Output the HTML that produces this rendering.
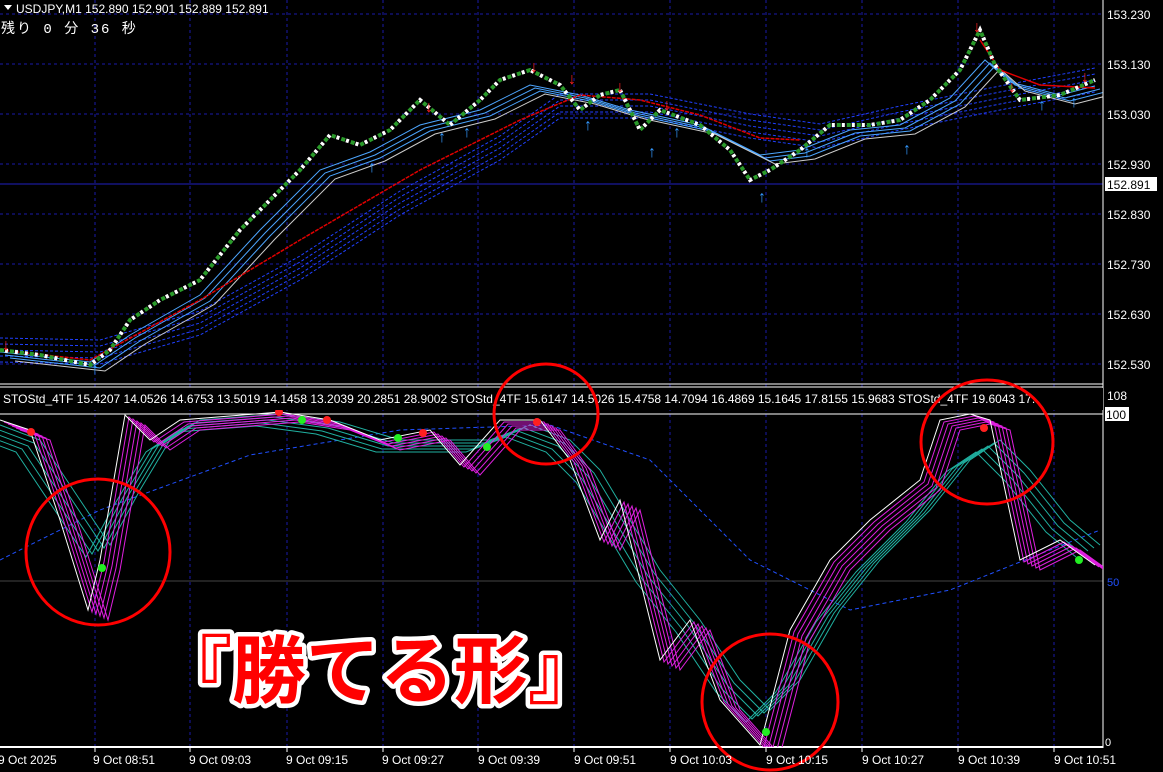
<!DOCTYPE html>
<html><head><meta charset="utf-8"><style>
html,body{margin:0;padding:0;background:#000;width:1163px;height:772px;overflow:hidden}
svg{display:block}
text{font-family:"Liberation Sans","Noto Sans CJK JP",sans-serif}
</style></head><body>
<svg width="1163" height="772" viewBox="0 0 1163 772" xmlns="http://www.w3.org/2000/svg">
<defs>
<clipPath id="ci"><rect x="0" y="410" width="1103" height="337"/></clipPath>
<clipPath id="cp"><rect x="0" y="0" width="1103" height="383"/></clipPath>
</defs>
<rect width="1163" height="772" fill="#000"/>
<g stroke="#1a1aa8" stroke-dasharray="3,3" stroke-width="1">
<line x1="95" y1="0" x2="95" y2="746"/><line x1="190" y1="0" x2="190" y2="746"/><line x1="287" y1="0" x2="287" y2="746"/><line x1="383" y1="0" x2="383" y2="746"/><line x1="478" y1="0" x2="478" y2="746"/><line x1="574" y1="0" x2="574" y2="746"/><line x1="670" y1="0" x2="670" y2="746"/><line x1="766" y1="0" x2="766" y2="746"/><line x1="862" y1="0" x2="862" y2="746"/><line x1="958" y1="0" x2="958" y2="746"/><line x1="1054" y1="0" x2="1054" y2="746"/>
<line x1="0" y1="14" x2="1103" y2="14"/><line x1="0" y1="64" x2="1103" y2="64"/><line x1="0" y1="114" x2="1103" y2="114"/><line x1="0" y1="164" x2="1103" y2="164"/><line x1="0" y1="214" x2="1103" y2="214"/><line x1="0" y1="264" x2="1103" y2="264"/><line x1="0" y1="314" x2="1103" y2="314"/><line x1="0" y1="364" x2="1103" y2="364"/>
</g>
<line x1="0" y1="184" x2="1103" y2="184" stroke="#2020c0"/>
<line x1="0" y1="581" x2="1103" y2="581" stroke="#444"/>
<g fill="none" stroke-width="1" clip-path="url(#cp)">
<g stroke="#2040ff" stroke-dasharray="3,2">
<polyline id="d" points="0,362 100,364 200,335 300,280 400,215 500,160 560,118 650,118 750,138 820,148 900,130 960,118 1000,110 1095,92"/>
<use href="#d" transform="translate(0,-6)"/><use href="#d" transform="translate(0,-12)"/><use href="#d" transform="translate(0,-18)"/><use href="#d" transform="translate(0,-24)"/>
</g>
<g stroke="#4da6ff">
<polyline id="r" points="0,352 90,362 130,335 200,295 260,230 320,170 370,152 420,125 480,110 530,85 580,95 630,110 700,125 760,155 800,150 850,130 900,125 950,98 985,60 1010,82 1060,95 1095,86"/>
<use href="#r" transform="translate(5,3)"/><use href="#r" transform="translate(10,6)"/>
<use href="#r" transform="translate(15,9)" stroke="#ccc"/>
</g>
<polyline points="0,350 90,360 200,300 300,240 420,170 520,120 580,95 640,100 700,115 760,138 800,140" stroke="#e00000" stroke-width="1.5" stroke-dasharray="4,1"/>
<polyline points="980,40 1000,70 1040,85 1095,88" stroke="#e00000" stroke-width="1.5"/>
</g>
<g fill="none" stroke-width="1">
<polyline points="0,350 40,355 90,365 110,350 130,320 160,300 200,280 240,230 270,200 300,170 330,135 360,145 390,130 420,100 450,125 480,100 500,80 530,70 560,85 580,110 600,95 620,90 640,130 660,110 700,125 730,150 750,180 770,170 800,150 830,125 870,125 900,120 930,100 960,70 980,30 995,65 1020,100 1060,95 1095,80" stroke="#2a9a2a" stroke-width="4" stroke-dasharray="4,6"/>
<polyline points="0,350 40,355 90,365 110,350 130,320 160,300 200,280 240,230 270,200 300,170 330,135 360,145 390,130 420,100 450,125 480,100 500,80 530,70 560,85 580,110 600,95 620,90 640,130 660,110 700,125 730,150 750,180 770,170 800,150 830,125 870,125 900,120 930,100 960,70 980,30 995,65 1020,100 1060,95 1095,80" stroke="#fff" stroke-width="4" stroke-dasharray="3,7" stroke-dashoffset="5"/>
</g>
<g fill="#3399ff" font-size="16" font-weight="bold"><text x="368" y="172">↑</text><text x="438" y="142">↑</text><text x="463" y="137">↑</text><text x="584" y="130">↑</text><text x="648" y="157">↑</text><text x="673" y="137">↑</text><text x="758" y="202">↑</text><text x="803" y="157">↑</text><text x="903" y="154">↑</text><text x="1038" y="110">↑</text><text x="1070" y="107">↑</text><text x="91" y="374">↑</text></g>
<g fill="#ff2020" font-size="16" font-weight="bold"><text x="2" y="350">↓</text><text x="530" y="72">↓</text><text x="568" y="84">↓</text><text x="616" y="92">↓</text><text x="663" y="110">↓</text><text x="973" y="32">↓</text><text x="1008" y="92">↓</text><text x="1081" y="82">↓</text><text x="425" y="112">↓</text></g>
<g fill="#fff" font-size="12">
<text x="1107" y="19">153.230</text><text x="1107" y="69">153.130</text><text x="1107" y="119">153.030</text><text x="1107" y="169">152.930</text><text x="1107" y="219">152.830</text><text x="1107" y="269">152.730</text><text x="1107" y="319">152.630</text><text x="1107" y="369">152.530</text><text x="1107" y="400">108</text>
</g>
<rect x="1105" y="177" width="52" height="14" fill="#fff"/><text x="1107" y="189" font-size="12" fill="#000">152.891</text>
<rect x="1105" y="407" width="24" height="14" fill="#fff"/><text x="1106" y="419" font-size="12" fill="#000">100</text>
<text x="1107" y="586" font-size="11" fill="#2050ff">50</text>
<text x="1105" y="746" font-size="11" fill="#fff">0</text>
<line x1="1103" y1="0" x2="1103" y2="748" stroke="#fff"/>
<line x1="0" y1="384" x2="1103" y2="384" stroke="#fff"/>
<line x1="0" y1="387" x2="1103" y2="387" stroke="#fff"/>
<line x1="0" y1="414" x2="1103" y2="414" stroke="#fff"/>
<line x1="0" y1="747" x2="1103" y2="747" stroke="#fff" stroke-width="2"/>
<g fill="none" clip-path="url(#ci)">
<polyline points="0,560 100,510 250,455 400,430 550,425 650,460 750,560 850,610 950,590 1050,550 1100,530" stroke="#2050ff" stroke-dasharray="4,3"/>
<g stroke="#20b0a0" stroke-width="1">
<polyline id="w" points="0,425 40,440 80,500 110,545 140,490 170,440 200,420 280,414 340,422 400,440 450,440 490,440 530,425 570,440 600,470 630,520 660,570 700,620 740,680 770,710 800,680 840,610 880,560 930,510 970,460 1000,440 1030,470 1070,520 1100,545" transform="translate(0,0)"/>
<use href="#w" transform="translate(-6,3)"/><use href="#w" transform="translate(-12,6)"/><use href="#w" transform="translate(-18,9)"/><use href="#w" transform="translate(-24,12)"/>
</g>
<g stroke="#e020e0" stroke-width="1">
<polyline id="m" points="0,420 30,430 60,520 88,610 100,560 125,415 150,440 180,420 280,412 330,420 380,440 430,430 460,465 500,420 540,420 570,460 600,540 620,500 640,580 660,660 690,620 720,700 760,745 790,630 830,560 870,520 920,480 940,420 970,414 990,420 1020,560 1060,540 1095,565" transform="translate(4,2)"/>
<use href="#m" transform="translate(4,2)"/><use href="#m" transform="translate(8,4)"/><use href="#m" transform="translate(12,6)"/><use href="#m" transform="translate(16,8)"/>
</g>
<polyline points="0,420 30,430 60,520 88,610 100,560 125,415 150,440 180,420 280,412 330,420 380,440 430,430 460,465 500,420 540,420 570,460 600,540 620,500 640,580 660,660 690,620 720,700 760,745 790,630 830,560 870,520 920,480 940,420 970,414 990,420 1020,560 1060,540 1095,565" stroke="#fff" stroke-width="1"/>
</g>
<g fill="#22ee22"><circle cx="102" cy="568" r="4"/><circle cx="302" cy="420" r="4"/><circle cx="398" cy="438" r="4"/><circle cx="487" cy="447" r="4"/><circle cx="766" cy="732" r="4"/><circle cx="1079" cy="560" r="4"/></g>
<g fill="#ff2020"><circle cx="31" cy="432" r="4"/><circle cx="279" cy="412" r="4"/><circle cx="327" cy="420" r="4"/><circle cx="423" cy="433" r="4"/><circle cx="537" cy="422" r="4"/><circle cx="984" cy="428" r="4"/></g>
<rect x="0" y="388" width="1103" height="22" fill="#000"/>
<text x="3" y="403" font-size="12" fill="#fff">STOStd_4TF 15.4207 14.0526 14.6753 13.5019 14.1458 13.2039 20.2851 28.9002  STOStd_4TF 15.6147 14.5026 15.4758 14.7094 16.4869 15.1645 17.8155 15.9683  STOStd_4TF 19.6043 17.</text>
<g fill="none" stroke="#f00" stroke-width="3">
<ellipse cx="98" cy="552" rx="72" ry="73"/>
<ellipse cx="546" cy="414" rx="52" ry="50"/>
<ellipse cx="987" cy="442" rx="66" ry="62"/>
<ellipse cx="770" cy="702" rx="68" ry="68"/>
</g>
<text x="158" y="697" font-size="74" font-weight="bold" fill="#ff0000" stroke="#fff" stroke-width="9" stroke-linejoin="round" paint-order="stroke" style="font-family:'Noto Sans CJK JP',sans-serif">『勝てる形』</text>
<path d="M4,5 L12,5 L8,10 Z" fill="#fff"/>
<text x="16" y="13" font-size="12" fill="#fff">USDJPY,M1  152.890 152.901 152.889 152.891</text>
<text x="1" y="33" font-size="14" fill="#fff" style="font-family:'Liberation Mono','Noto Sans CJK JP',monospace" letter-spacing="2">残り 0 分 36 秒</text>
<g stroke="#fff"><line x1="95" y1="747" x2="95" y2="752"/><line x1="190" y1="747" x2="190" y2="752"/><line x1="287" y1="747" x2="287" y2="752"/><line x1="383" y1="747" x2="383" y2="752"/><line x1="478" y1="747" x2="478" y2="752"/><line x1="574" y1="747" x2="574" y2="752"/><line x1="670" y1="747" x2="670" y2="752"/><line x1="766" y1="747" x2="766" y2="752"/><line x1="862" y1="747" x2="862" y2="752"/><line x1="958" y1="747" x2="958" y2="752"/><line x1="1054" y1="747" x2="1054" y2="752"/></g>
<g fill="#fff" font-size="12">
<text x="-2" y="764">9 Oct 2025</text><text x="93" y="764">9 Oct 08:51</text><text x="189" y="764">9 Oct 09:03</text><text x="286" y="764">9 Oct 09:15</text><text x="382" y="764">9 Oct 09:27</text><text x="478" y="764">9 Oct 09:39</text><text x="574" y="764">9 Oct 09:51</text><text x="670" y="764">9 Oct 10:03</text><text x="766" y="764">9 Oct 10:15</text><text x="862" y="764">9 Oct 10:27</text><text x="958" y="764">9 Oct 10:39</text><text x="1054" y="764">9 Oct 10:51</text>
</g>
</svg>
</body></html>
